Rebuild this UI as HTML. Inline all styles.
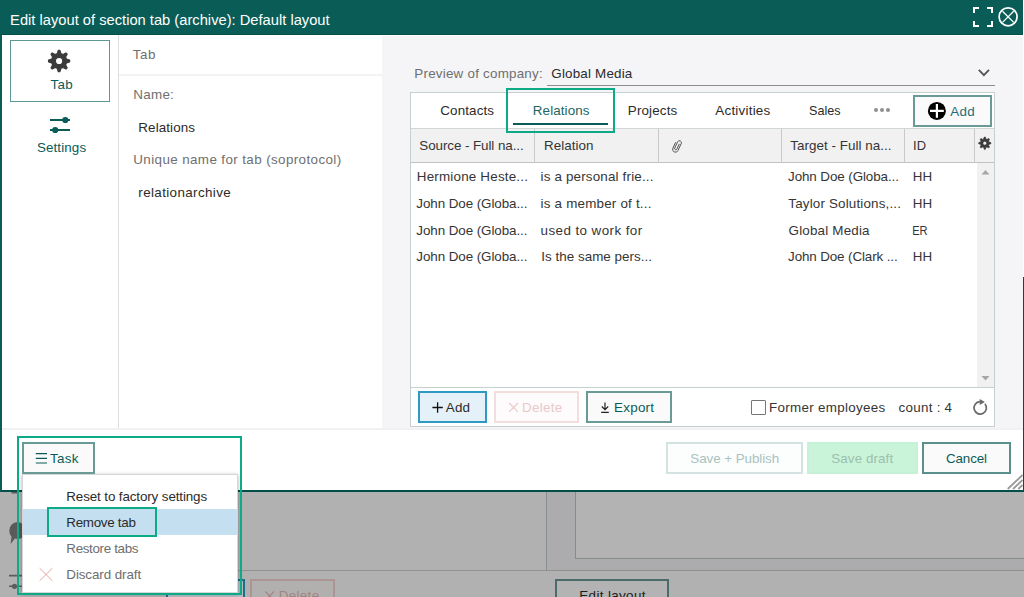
<!DOCTYPE html>
<html><head><meta charset="utf-8"><title>Edit layout</title>
<style>
*{box-sizing:border-box;margin:0;padding:0}
html,body{width:1024px;height:597px;overflow:hidden}
body{background:#b1b1b1;font-family:"Liberation Sans",sans-serif;font-size:13.4px;color:#222;position:relative}
.a{position:absolute}
.t{position:absolute;white-space:nowrap;line-height:20px}
.btn{position:absolute;border:2px solid #6a9a96;background:#fafafa}
.hl{position:absolute;border:2px solid #0caa87}
svg{position:absolute;left:0;top:0;overflow:visible}
</style></head><body>
<svg width="1024" height="597" viewBox="0 0 1024 597">
<path d="M9.300 530.500a8.200 8.600 0 0 1 16.400 0a8.200 8.600 0 0 1 -10.800 8.100l-4.300 5.400l0.900-7.300a8.400 8.400 0 0 1 -2.200 -6.200z" fill="#5a5a5a"/>
<path d="M9 575.600h14 M9 586.300h14" stroke="#5c5c5c" stroke-width="1.600"/><circle cx="14.500" cy="586.300" r="2.600" fill="#5c5c5c"/>
<path d="M11.500 492.500h7" stroke="#5c5c5c" stroke-width="2"/>
</svg>

<!-- dimmed background page -->
<div class="a" style="left:547px;top:492px;width:477px;height:78px;background:#acacae"></div>
<div class="a" style="left:575px;top:492px;width:449px;height:67px;background:#b3b3b3;border-left:1px solid #868c8c;border-bottom:1px solid #868c8c"></div>
<div class="a" style="left:546px;top:492px;width:1px;height:78px;background:#8a9090"></div>
<div class="a" style="left:30px;top:570px;width:994px;height:1px;background:#8e9292"></div>
<div class="btn" style="left:555px;top:579px;width:114px;height:32px;background:#b3b3b3;border-color:#4a6b68"></div>
<div class="btn" style="left:250px;top:579px;width:85px;height:32px;background:#b2b0ae;border-color:#ac9494"></div>
<div class="btn" style="left:166px;top:579px;width:79px;height:32px;background:#b4bcc1;border-color:#1f6c8b"></div>

<!-- dialog -->
<div class="a" style="left:0;top:0;width:1024px;height:492px;background:#fff;border-left:2px solid #0a5d57;border-bottom:2px solid #034e49"></div>
<div class="a" style="left:0;top:0;width:1023px;height:35px;background:#0a5d57;border-bottom:1px solid #044f49"></div>
<div class="a" style="left:382px;top:36px;width:641px;height:392px;background:#f5f5f7"></div>
<div class="a" style="left:1023px;top:277px;width:1px;height:215px;background:#034e49"></div>
<div class="a" style="left:118px;top:35px;width:1px;height:393px;background:#dedede"></div>
<div class="a" style="left:119px;top:74px;width:263px;height:2px;background:#f3f3f5"></div>
<div class="a" style="left:2px;top:428px;width:1021px;height:2px;background:#f1f1f3"></div>
<div class="a" style="left:10px;top:40px;width:100px;height:62px;border:1px solid #5f9793"></div>

<div class="a" style="left:547px;top:85px;width:448px;height:1px;background:#8c8c8c"></div>
<div class="a" style="left:410px;top:92px;width:585px;height:335px;background:#fff;border:1px solid #c6d1cf"></div>
<div class="a" style="left:411px;top:128px;width:583px;height:35px;background:#f1f1f1;border-top:1px solid #d0d6d5;border-bottom:1px solid #c2c2c2"></div>
<div class="a" style="left:534px;top:129px;width:1px;height:33px;background:#c9c9c9"></div>
<div class="a" style="left:658px;top:129px;width:1px;height:33px;background:#c9c9c9"></div>
<div class="a" style="left:781px;top:129px;width:1px;height:33px;background:#c9c9c9"></div>
<div class="a" style="left:904px;top:129px;width:1px;height:33px;background:#c9c9c9"></div>
<div class="a" style="left:974px;top:129px;width:1px;height:33px;background:#c9c9c9"></div>
<div class="a" style="left:977px;top:163px;width:17px;height:224px;background:#f1f1f1"></div>
<div class="a" style="left:411px;top:387px;width:583px;height:1px;background:#c6d1cf"></div>

<div class="a" style="left:513px;top:123px;width:95px;height:2px;background:#0a5d57"></div>
<div class="btn" style="left:913px;top:95px;width:79px;height:32px"></div>
<div class="hl" style="left:506px;top:88px;width:109px;height:45px"></div>

<div class="btn" style="left:418px;top:391px;width:69px;height:32px;border-color:#2f98c3;background:#e5f1f9"></div>
<div class="btn" style="left:494px;top:391px;width:85px;height:32px;border-color:#f3dede;background:#fdfbfb"></div>
<div class="btn" style="left:586px;top:391px;width:86px;height:32px"></div>
<div class="a" style="left:751px;top:400px;width:15px;height:15px;border:1px solid #767676;background:#fff;border-radius:1px"></div>

<div class="btn" style="left:666px;top:442px;width:137px;height:32px;border-color:#d3e3e1;background:#fcfdfd"></div>
<div class="btn" style="left:807px;top:442px;width:111px;height:32px;border-color:#c5f1d6;background:#c9f4da"></div>
<div class="btn" style="left:922px;top:442px;width:89px;height:32px;border-color:#5b8f8b"></div>

<!-- task menu -->
<div class="a" style="left:22px;top:474px;width:216px;height:119px;background:#fff;border:1px solid #d6d6d6;box-shadow:0 1px 4px rgba(0,0,0,.32)"></div>
<div class="a" style="left:23px;top:509px;width:214px;height:26px;background:#c4dff0"></div>
<div class="btn" style="left:22px;top:442px;width:73px;height:32px"></div>
<div class="hl" style="left:47px;top:507px;width:110px;height:30px"></div>
<div class="hl" style="left:17px;top:436px;width:225px;height:159px"></div>

<div class="t" style="left:10.1px;top:10.2px;color:#fff;font-size:14.7px;letter-spacing:0.006px">Edit layout of section tab (archive): Default layout</div>
<div class="t" style="left:50.4px;top:75px;color:#0a5c57;font-size:13.4px;letter-spacing:0.4px">Tab</div>
<div class="t" style="left:36.9px;top:138.4px;color:#0a5c57;font-size:13.4px;letter-spacing:0.114px">Settings</div>
<div class="t" style="left:132.8px;top:45px;color:#6f6f6f;font-size:13.4px;letter-spacing:0.55px">Tab</div>
<div class="t" style="left:133.3px;top:85px;color:#6f6f6f;font-size:13.4px;letter-spacing:0.275px">Name:</div>
<div class="t" style="left:138.3px;top:118px;color:#2b2b2b;font-size:13.4px;letter-spacing:0.106px">Relations</div>
<div class="t" style="left:133.3px;top:150px;color:#6f6f6f;font-size:13.4px;letter-spacing:0.39px">Unique name for tab (soprotocol)</div>
<div class="t" style="left:138.3px;top:183px;color:#2b2b2b;font-size:13.4px;letter-spacing:0.382px">relationarchive</div>
<div class="t" style="left:414.3px;top:64px;color:#6f6f6f;font-size:13.4px;letter-spacing:0.228px">Preview of company:</div>
<div class="t" style="left:551.3px;top:64px;color:#2b2b2b;font-size:13.4px;letter-spacing:0.191px">Global Media</div>
<div class="t" style="left:440.3px;top:101px;color:#2b2b2b;font-size:13.4px;letter-spacing:0.121px">Contacts</div>
<div class="t" style="left:532.8px;top:101px;color:#1d6661;font-size:13.4px;letter-spacing:0.106px">Relations</div>
<div class="t" style="left:627.8px;top:101px;color:#2b2b2b;font-size:13.4px;letter-spacing:0.157px">Projects</div>
<div class="t" style="left:715.3px;top:101px;color:#2b2b2b;font-size:13.4px;letter-spacing:0.233px">Activities</div>
<div class="t" style="left:808.55px;top:101px;color:#2b2b2b;font-size:13.4px;letter-spacing:0px;transform:scaleX(0.941);transform-origin:1px 0">Sales</div>
<div class="t" style="left:950.2px;top:102px;color:#1d6d78;font-size:13.4px;letter-spacing:0.3px">Add</div>
<div class="t" style="left:419.3px;top:136px;color:#353535;font-size:13.4px;letter-spacing:-0.072px">Source - Full na...</div>
<div class="t" style="left:544.05px;top:136px;color:#353535;font-size:13.4px;letter-spacing:0.05px">Relation</div>
<div class="t" style="left:790.3px;top:136px;color:#353535;font-size:13.4px;letter-spacing:0.039px">Target - Full na...</div>
<div class="t" style="left:912.8px;top:136px;color:#353535;font-size:13.4px;letter-spacing:0px;transform:scaleX(0.967);transform-origin:1px 0">ID</div>
<div class="t" style="left:416.8px;top:167px;color:#353535;font-size:13.4px;letter-spacing:0.2px">Hermione Heste...</div>
<div class="t" style="left:416.3px;top:194px;color:#353535;font-size:13.4px;letter-spacing:-0.076px">John Doe (Globa...</div>
<div class="t" style="left:416.3px;top:221px;color:#353535;font-size:13.4px;letter-spacing:-0.076px">John Doe (Globa...</div>
<div class="t" style="left:416.3px;top:247px;color:#353535;font-size:13.4px;letter-spacing:-0.076px">John Doe (Globa...</div>
<div class="t" style="left:540.55px;top:167px;color:#353535;font-size:13.4px;letter-spacing:0.173px">is a personal frie...</div>
<div class="t" style="left:540.55px;top:194px;color:#353535;font-size:13.4px;letter-spacing:0.206px">is a member of t...</div>
<div class="t" style="left:540.55px;top:221px;color:#353535;font-size:13.4px;letter-spacing:0.423px">used to work for</div>
<div class="t" style="left:541.3px;top:247px;color:#353535;font-size:13.4px;letter-spacing:0.025px">Is the same pers...</div>
<div class="t" style="left:788.05px;top:167px;color:#353535;font-size:13.4px;letter-spacing:-0.091px">John Doe (Globa...</div>
<div class="t" style="left:788.35px;top:194px;color:#353535;font-size:13.4px;letter-spacing:0.166px">Taylor Solutions,...</div>
<div class="t" style="left:788.55px;top:221px;color:#353535;font-size:13.4px;letter-spacing:0.191px">Global Media</div>
<div class="t" style="left:788.05px;top:247px;color:#353535;font-size:13.4px;letter-spacing:-0.114px">John Doe (Clark ...</div>
<div class="t" style="left:912.8px;top:167px;color:#353535;font-size:13.4px;letter-spacing:0.1px">HH</div>
<div class="t" style="left:912.8px;top:194px;color:#353535;font-size:13.4px;letter-spacing:0.1px">HH</div>
<div class="t" style="left:912.3px;top:221px;color:#353535;font-size:13.4px;letter-spacing:0px;transform:scaleX(0.829);transform-origin:1px 0">ER</div>
<div class="t" style="left:912.8px;top:247px;color:#353535;font-size:13.4px;letter-spacing:0.1px">HH</div>
<div class="t" style="left:445.8px;top:398px;color:#2b2b2b;font-size:13.4px;letter-spacing:0.2px">Add</div>
<div class="t" style="left:522.0px;top:398px;color:#e9c9c9;font-size:13.4px;letter-spacing:0.28px">Delete</div>
<div class="t" style="left:614.1px;top:398px;color:#0a5c57;font-size:13.4px;letter-spacing:0.24px">Export</div>
<div class="t" style="left:769.1px;top:398px;color:#353535;font-size:13.4px;letter-spacing:0.3px">Former employees</div>
<div class="t" style="left:898.5px;top:398px;color:#353535;font-size:13.4px;letter-spacing:0.275px">count : 4</div>
<div class="t" style="left:690.3px;top:449px;color:#a9c3c0;font-size:13.4px;letter-spacing:-0.062px">Save + Publish</div>
<div class="t" style="left:831.3px;top:449px;color:#9dbfad;font-size:13.4px;letter-spacing:0.089px">Save draft</div>
<div class="t" style="left:946.0px;top:449px;color:#0a5c57;font-size:13.4px;letter-spacing:-0.14px">Cancel</div>
<div class="t" style="left:50.0px;top:449px;color:#0a5c57;font-size:13.4px;letter-spacing:0.267px">Task</div>
<div class="t" style="left:66.3px;top:487px;color:#2b2b2b;font-size:13.4px;letter-spacing:-0.117px">Reset to factory settings</div>
<div class="t" style="left:66.3px;top:513px;color:#2b2b2b;font-size:13.4px;letter-spacing:-0.289px">Remove tab</div>
<div class="t" style="left:66.3px;top:539px;color:#6e6e6e;font-size:13.4px;letter-spacing:-0.336px">Restore tabs</div>
<div class="t" style="left:66.3px;top:565px;color:#6e6e6e;font-size:13.4px;letter-spacing:-0.092px">Discard draft</div>
<div class="t" style="left:579.3px;top:586.3px;color:#1b1b1b;font-size:13.4px;letter-spacing:0.36px">Edit layout</div>
<div class="t" style="left:278.8px;top:586.4px;color:#a08484;font-size:13.4px;letter-spacing:0.32px">Delete</div>
<div class="t" style="left:176.8px;top:592px;color:#1b1b1b;font-size:13.4px;letter-spacing:0.12px">Add TW</div>
<svg width="1024" height="597" viewBox="0 0 1024 597">
<!-- title icons -->
<path d="M974 13v-5h5 M987 8h5v5 M992 21v5h-5 M979 26h-5v-5" fill="none" stroke="#fff" stroke-width="2"/>
<circle cx="1008.1" cy="16.8" r="9" fill="none" stroke="#fff" stroke-width="1.7"/>
<path d="M1002.5 11.2l11.2 11.2 M1013.7 11.2l-11.2 11.2" stroke="#fff" stroke-width="1.3"/>
<!-- sidebar icons -->
<path d="M57.26 53.63 L58.27 50.43 L59.93 50.43 L60.94 53.63 L63.01 54.49 L65.98 52.94 L67.16 54.12 L65.61 57.09 L66.47 59.16 L69.67 60.17 L69.67 61.83 L66.47 62.84 L65.61 64.91 L67.16 67.88 L65.98 69.06 L63.01 67.51 L60.94 68.37 L59.93 71.57 L58.27 71.57 L57.26 68.37 L55.19 67.51 L52.22 69.06 L51.04 67.88 L52.59 64.91 L51.73 62.84 L48.53 61.83 L48.53 60.17 L51.73 59.16 L52.59 57.09 L51.04 54.12 L52.22 52.94 L55.19 54.49Z M62.80 61.00 A3.7 3.7 0 1 0 55.40 61.00 A3.7 3.7 0 1 0 62.80 61.00Z" fill="#3b3b3b" fill-rule="evenodd" stroke="#3b3b3b" stroke-width="1.2" stroke-linejoin="round"/>
<path d="M50 120h20 M50 130h20" stroke="#0a5d57" stroke-width="1.8"/>
<circle cx="65.3" cy="120" r="3.1" fill="#0a5d57"/><circle cx="55.2" cy="130" r="3.1" fill="#0a5d57"/>
<!-- chevron -->
<path d="M978.800 69.900l5.100 5.200l5.100-5.200" fill="none" stroke="#555" stroke-width="1.900"/>
<!-- dots -->
<circle cx="876" cy="110" r="2" fill="#8f8f8f"/><circle cx="882" cy="110" r="2" fill="#8f8f8f"/><circle cx="888" cy="110" r="2" fill="#8f8f8f"/>
<!-- circle plus -->
<circle cx="936.9" cy="110.9" r="9" fill="#000"/>
<path d="M930 110.9h13.8 M936.9 104v13.8" stroke="#fff" stroke-width="2.2"/>
<!-- paperclip -->
<g transform="rotate(25 677 146)" fill="none" stroke="#4a4a4a" stroke-width="0.85" stroke-linecap="round">
<path d="M678.200 143.500v5.300a1.200 1.200 0 0 1 -2.400 0v-6.800a2 2 0 0 1 4 0v7.700a2.800 2.800 0 0 1 -5.600 0v-6.200"/>
</g>
<!-- small gear -->
<path d="M983.69 139.05 L984.27 137.12 L985.33 137.12 L985.91 139.05 L986.95 139.48 L988.72 138.53 L989.47 139.28 L988.52 141.05 L988.95 142.09 L990.88 142.67 L990.88 143.73 L988.95 144.31 L988.52 145.35 L989.47 147.12 L988.72 147.87 L986.95 146.92 L985.91 147.35 L985.33 149.28 L984.27 149.28 L983.69 147.35 L982.65 146.92 L980.88 147.87 L980.13 147.12 L981.08 145.35 L980.65 144.31 L978.72 143.73 L978.72 142.67 L980.65 142.09 L981.08 141.05 L980.13 139.28 L980.88 138.53 L982.65 139.48Z M986.80 143.20 A2.0 2.0 0 1 0 982.80 143.20 A2.0 2.0 0 1 0 986.80 143.20Z" fill="#3b3b3b" fill-rule="evenodd" stroke="#3b3b3b" stroke-width="0.8" stroke-linejoin="round"/>
<!-- scroll arrows -->
<path d="M981.5 174.5l4-4.500l4 4.500z" fill="#a6a6a6"/>
<path d="M981.500 376l4 4.500l4-4.500z" fill="#a6a6a6"/>
<!-- list buttons icons -->
<path d="M432.400 407.500h10.400 M437.600 402.300v10.400" stroke="#111" stroke-width="1.3"/>
<path d="M509.200 403l8.800 8.800 M518 403l-8.800 8.800" stroke="#e9c9c9" stroke-width="1.100"/>
<path d="M605 402.500v7 M601.800 406.500l3.200 3.200l3.200-3.200 M601.200 412.300h7.600" fill="none" stroke="#222" stroke-width="1.200"/>
<!-- refresh -->
<path d="M984.900 403.800a6.200 6.200 0 1 1 -5 -2.100" fill="none" stroke="#6a6a6a" stroke-width="1.700"/>
<path d="M979.700 399l5.200 2.900l-5.200 3.100z" fill="#6a6a6a"/>
<!-- hamburger -->
<path d="M35.800 453.700h11.200 M35.800 458.350h11.200 M35.800 463h11.200" stroke="#0a5d57" stroke-width="1.200"/>
<!-- discard x -->
<path d="M39.600 568.200l12.800 12.600 M52.400 568.200l-12.800 12.600" stroke="#e2a89f" stroke-width="1"/>
<!-- bg delete x -->
<path d="M265.200 591.300l9 9 M274.200 591.300l-9 9" stroke="#a08484" stroke-width="1.200"/>
<!-- grip -->
<path d="M1007.700 489l14.800-14 M1013 489l9.500-9 M1018.300 489l4.200-4" stroke="#999" stroke-width="1.800"/>
</svg>
</body></html>
